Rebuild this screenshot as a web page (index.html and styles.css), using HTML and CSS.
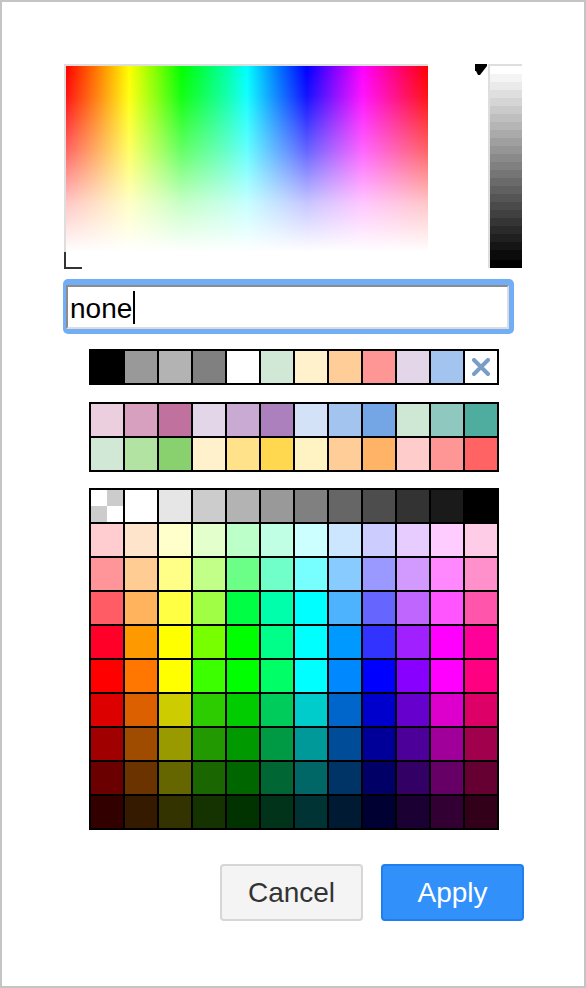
FILE: index.html
```html
<!DOCTYPE html>
<html>
<head>
<meta charset="utf-8">
<link rel="stylesheet" href="styles.css">
</head>
<body>
<div class="dialog">
  <div class="picker">
    <div class="pad-frame">
      <div class="pad">
        <div class="pad-white"></div>
      </div>
      <div class="cross"></div>
    </div>
    <svg class="arrow" width="13" height="13" viewBox="0 0 13 13"><polygon points="0,0 12,0 12,2 5,11 3,11 1,7 0,7" fill="#000"/></svg>
    <div class="slider-frame"><div class="slider"></div></div>
  </div>

  <div class="ring">
    <div class="input"><span class="val">none</span><span class="caret"></span></div>
  </div>

  <div class="palette first">
    <div class="sw" style="background:#000000"></div>
    <div class="sw" style="background:#999999"></div>
    <div class="sw" style="background:#b3b3b3"></div>
    <div class="sw" style="background:#808080"></div>
    <div class="sw" style="background:#ffffff"></div>
    <div class="sw" style="background:#d0e8d5"></div>
    <div class="sw" style="background:#fff1cc"></div>
    <div class="sw" style="background:#ffcd97"></div>
    <div class="sw" style="background:#ff9696"></div>
    <div class="sw" style="background:#e3d6e8"></div>
    <div class="sw" style="background:#a2c4ee"></div>
    <div class="sw clear"><svg width="18" height="18" viewBox="0 0 18 18"><path d="M2 2 L16 16 M16 2 L2 16" stroke="#7a9dc8" stroke-width="4" stroke-linecap="round"/></svg></div>
  </div>

  <div class="palette preset">
    <div class="sw" style="background:#eccfdf"></div>
    <div class="sw" style="background:#d6a0be"></div>
    <div class="sw" style="background:#c0719d"></div>
    <div class="sw" style="background:#e3d6e8"></div>
    <div class="sw" style="background:#c9aad3"></div>
    <div class="sw" style="background:#ab80bd"></div>
    <div class="sw" style="background:#d4e2f7"></div>
    <div class="sw" style="background:#a2c4ee"></div>
    <div class="sw" style="background:#74a6e6"></div>
    <div class="sw" style="background:#cee8d5"></div>
    <div class="sw" style="background:#8ec8bf"></div>
    <div class="sw" style="background:#4fad9f"></div>
    <div class="sw" style="background:#d0e8d5"></div>
    <div class="sw" style="background:#b2e3a3"></div>
    <div class="sw" style="background:#88d16e"></div>
    <div class="sw" style="background:#fff1cc"></div>
    <div class="sw" style="background:#ffe28a"></div>
    <div class="sw" style="background:#ffd850"></div>
    <div class="sw" style="background:#fff3c3"></div>
    <div class="sw" style="background:#ffcd97"></div>
    <div class="sw" style="background:#ffb366"></div>
    <div class="sw" style="background:#ffcccc"></div>
    <div class="sw" style="background:#ff9696"></div>
    <div class="sw" style="background:#ff6363"></div>
  </div>

  <div class="palette grid">
    <div class="sw none"></div>
    <div class="sw" style="background:#ffffff"></div>
    <div class="sw" style="background:#e6e6e6"></div>
    <div class="sw" style="background:#cccccc"></div>
    <div class="sw" style="background:#b3b3b3"></div>
    <div class="sw" style="background:#999999"></div>
    <div class="sw" style="background:#808080"></div>
    <div class="sw" style="background:#666666"></div>
    <div class="sw" style="background:#4d4d4d"></div>
    <div class="sw" style="background:#333333"></div>
    <div class="sw" style="background:#1a1a1a"></div>
    <div class="sw" style="background:#000000"></div>

    <div class="sw" style="background:#ffcccf"></div>
    <div class="sw" style="background:#ffe4cc"></div>
    <div class="sw" style="background:#ffffcc"></div>
    <div class="sw" style="background:#e2ffcc"></div>
    <div class="sw" style="background:#bdffc8"></div>
    <div class="sw" style="background:#c0ffe4"></div>
    <div class="sw" style="background:#ccffff"></div>
    <div class="sw" style="background:#cce6ff"></div>
    <div class="sw" style="background:#ccccff"></div>
    <div class="sw" style="background:#e6ccff"></div>
    <div class="sw" style="background:#ffccff"></div>
    <div class="sw" style="background:#ffcce8"></div>

    <div class="sw" style="background:#ff9499"></div>
    <div class="sw" style="background:#ffcc94"></div>
    <div class="sw" style="background:#ffff88"></div>
    <div class="sw" style="background:#c2ff88"></div>
    <div class="sw" style="background:#6cff88"></div>
    <div class="sw" style="background:#70ffc8"></div>
    <div class="sw" style="background:#77ffff"></div>
    <div class="sw" style="background:#88ccff"></div>
    <div class="sw" style="background:#9999ff"></div>
    <div class="sw" style="background:#d299ff"></div>
    <div class="sw" style="background:#ff88ff"></div>
    <div class="sw" style="background:#ff90cc"></div>

    <div class="sw" style="background:#ff5c66"></div>
    <div class="sw" style="background:#ffb35c"></div>
    <div class="sw" style="background:#ffff44"></div>
    <div class="sw" style="background:#a0ff44"></div>
    <div class="sw" style="background:#00ff44"></div>
    <div class="sw" style="background:#00ffaa"></div>
    <div class="sw" style="background:#00ffff"></div>
    <div class="sw" style="background:#4db3ff"></div>
    <div class="sw" style="background:#6666ff"></div>
    <div class="sw" style="background:#bf66ff"></div>
    <div class="sw" style="background:#ff55ff"></div>
    <div class="sw" style="background:#ff55aa"></div>

    <div class="sw" style="background:#ff0028"></div>
    <div class="sw" style="background:#ff9900"></div>
    <div class="sw" style="background:#ffff00"></div>
    <div class="sw" style="background:#77ff00"></div>
    <div class="sw" style="background:#00ff00"></div>
    <div class="sw" style="background:#00ff88"></div>
    <div class="sw" style="background:#00ffff"></div>
    <div class="sw" style="background:#0099ff"></div>
    <div class="sw" style="background:#3333ff"></div>
    <div class="sw" style="background:#a020ff"></div>
    <div class="sw" style="background:#ff00ff"></div>
    <div class="sw" style="background:#ff0099"></div>

    <div class="sw" style="background:#ff0000"></div>
    <div class="sw" style="background:#ff7700"></div>
    <div class="sw" style="background:#ffff00"></div>
    <div class="sw" style="background:#3cff00"></div>
    <div class="sw" style="background:#00ff00"></div>
    <div class="sw" style="background:#00ff66"></div>
    <div class="sw" style="background:#00ffff"></div>
    <div class="sw" style="background:#0088ff"></div>
    <div class="sw" style="background:#0000ff"></div>
    <div class="sw" style="background:#8800ff"></div>
    <div class="sw" style="background:#ff00ff"></div>
    <div class="sw" style="background:#ff0080"></div>

    <div class="sw" style="background:#dd0000"></div>
    <div class="sw" style="background:#dd6000"></div>
    <div class="sw" style="background:#cccc00"></div>
    <div class="sw" style="background:#2ccc00"></div>
    <div class="sw" style="background:#00cc00"></div>
    <div class="sw" style="background:#00cc5c"></div>
    <div class="sw" style="background:#00cccc"></div>
    <div class="sw" style="background:#0066cc"></div>
    <div class="sw" style="background:#0000cc"></div>
    <div class="sw" style="background:#6600cc"></div>
    <div class="sw" style="background:#dd00cc"></div>
    <div class="sw" style="background:#dd0066"></div>

    <div class="sw" style="background:#a00000"></div>
    <div class="sw" style="background:#a04c00"></div>
    <div class="sw" style="background:#999900"></div>
    <div class="sw" style="background:#229900"></div>
    <div class="sw" style="background:#009900"></div>
    <div class="sw" style="background:#009944"></div>
    <div class="sw" style="background:#009999"></div>
    <div class="sw" style="background:#004c99"></div>
    <div class="sw" style="background:#000099"></div>
    <div class="sw" style="background:#4c0099"></div>
    <div class="sw" style="background:#a00099"></div>
    <div class="sw" style="background:#a0004c"></div>

    <div class="sw" style="background:#6a0000"></div>
    <div class="sw" style="background:#6a3300"></div>
    <div class="sw" style="background:#666600"></div>
    <div class="sw" style="background:#1a6600"></div>
    <div class="sw" style="background:#006600"></div>
    <div class="sw" style="background:#006633"></div>
    <div class="sw" style="background:#006666"></div>
    <div class="sw" style="background:#003366"></div>
    <div class="sw" style="background:#000066"></div>
    <div class="sw" style="background:#330066"></div>
    <div class="sw" style="background:#660066"></div>
    <div class="sw" style="background:#660033"></div>

    <div class="sw" style="background:#330000"></div>
    <div class="sw" style="background:#361a00"></div>
    <div class="sw" style="background:#333300"></div>
    <div class="sw" style="background:#143300"></div>
    <div class="sw" style="background:#003300"></div>
    <div class="sw" style="background:#00331a"></div>
    <div class="sw" style="background:#003333"></div>
    <div class="sw" style="background:#001a33"></div>
    <div class="sw" style="background:#000033"></div>
    <div class="sw" style="background:#1a0033"></div>
    <div class="sw" style="background:#330033"></div>
    <div class="sw" style="background:#33001a"></div>
  </div>

  <div class="buttons">
    <button class="btn cancel">Cancel</button>
    <button class="btn apply">Apply</button>
  </div>
</div>
</body>
</html>
```
FILE: styles.css
```css
html, body {
  margin: 0;
  padding: 0;
  background: #fff;
}

.dialog {
  box-sizing: border-box;
  width: 586px;
  height: 988px;
  border: 2px solid #c4c4c4;
  background: #fff;
  padding-top: 62px;
  font-family: "Liberation Sans", Arial, sans-serif;
}

.picker {
  display: flex;
  align-items: flex-start;
  margin-left: 62px;
}

.pad-frame {
  position: relative;
  border-top: 2px solid #dedede;
  border-left: 2px solid #dedede;
}

.pad {
  overflow: hidden;
  width: 362px;
  height: 202px;
  background: linear-gradient(to right,
    #ff0000 0%, #ff8000 9%, #ffff00 17.5%, #80ff00 25%, #00ff00 32%,
    #00ff40 37%, #00ffa0 44%, #00ffff 50%, #0080ff 58%, #0000ff 66.5%, #8000ff 74%,
    #ff00ff 82%, #ff0080 91%, #ff0000 100%);
}

.pad-white {
  width: 100%;
  height: 100%;
  background: linear-gradient(to bottom,
    rgba(255,255,255,0) 0%,
    rgba(255,255,255,0.08) 15%,
    rgba(255,255,255,0.4) 42%,
    rgba(255,255,255,0.78) 68%,
    rgba(255,255,255,1) 92%);
}

.cross {
  position: absolute;
  left: -2px;
  top: 186px;
  width: 18px;
  height: 17px;
  border-left: 2px solid #333;
  border-bottom: 2px solid #333;
  box-sizing: border-box;
}

.arrow {
  display: block;
  margin-left: 47px;
  margin-right: 0;
}

.slider-frame {
  border-top: 2px solid #dedede;
  border-left: 2px solid #dedede;
}

.slider {
  width: 32px;
  height: 202px;
  background: linear-gradient(to bottom,
    #ffffff 0 8px, #f4f4f4 8px 16px, #eaeaea 16px 24px, #dfdfdf 24px 32px,
    #d5d5d5 32px 40px, #cacaca 40px 48px, #bfbfbf 48px 56px, #b5b5b5 56px 64px,
    #aaaaaa 64px 72px, #9f9f9f 72px 80px, #959595 80px 88px, #8a8a8a 88px 96px,
    #808080 96px 104px, #757575 104px 112px, #6a6a6a 112px 120px, #606060 120px 128px,
    #555555 128px 136px, #4a4a4a 136px 144px, #404040 144px 152px, #353535 152px 160px,
    #2a2a2a 160px 168px, #202020 168px 176px, #151515 176px 184px, #0b0b0b 184px 194px,
    #000000 194px 202px);
}

.ring {
  margin-top: 11px;
  margin-left: 61px;
  width: 451px;
  height: 55px;
  box-sizing: border-box;
  padding: 6px 5px 5px 3px;
  background: #72aef5;
  border-radius: 5px;
}

.input {
  box-sizing: border-box;
  height: 44px;
  border: 2px solid;
  border-color: #8c8c8c #dcdcdc #dcdcdc #8c8c8c;
  background: #fff;
  display: flex;
  align-items: center;
  padding-left: 2px;
  padding-top: 3px;
  font-size: 28px;
  color: #000;
}

.val {
  line-height: 1;
}

.caret {
  display: inline-block;
  width: 2px;
  height: 33px;
  background: #000;
  margin-left: 1px;
  margin-top: -2px;
}

.palette {
  display: grid;
  grid-template-columns: repeat(12, 32px);
  grid-auto-rows: 32px;
  gap: 2px;
  padding: 2px;
  background: #000;
  width: max-content;
  margin-left: 87px;
}

.palette.first {
  margin-top: 15px;
}

.palette.preset {
  margin-top: 17px;
}

.palette.grid {
  margin-top: 16px;
}

.sw {
  width: 32px;
  height: 32px;
}

.sw.clear {
  background: #fff;
  display: flex;
  align-items: center;
  justify-content: center;
}

.sw.none {
  background: conic-gradient(#cccccc 0 25%, #ffffff 0 50%, #cccccc 0 75%, #ffffff 0);
}

.buttons {
  display: flex;
  justify-content: flex-end;
  gap: 18px;
  margin-top: 34px;
  padding-right: 60px;
}

.btn {
  box-sizing: border-box;
  width: 143px;
  height: 57px;
  border-radius: 4px;
  font-family: "Liberation Sans", Arial, sans-serif;
  font-size: 28px;
  padding: 0;
  cursor: pointer;
}

.btn.cancel {
  background: #f4f4f4;
  border: 2px solid #d6d6d6;
  color: #333;
}

.btn.apply {
  background: #3190f9;
  border: 2px solid #1f7fee;
  color: #fff;
}
```
